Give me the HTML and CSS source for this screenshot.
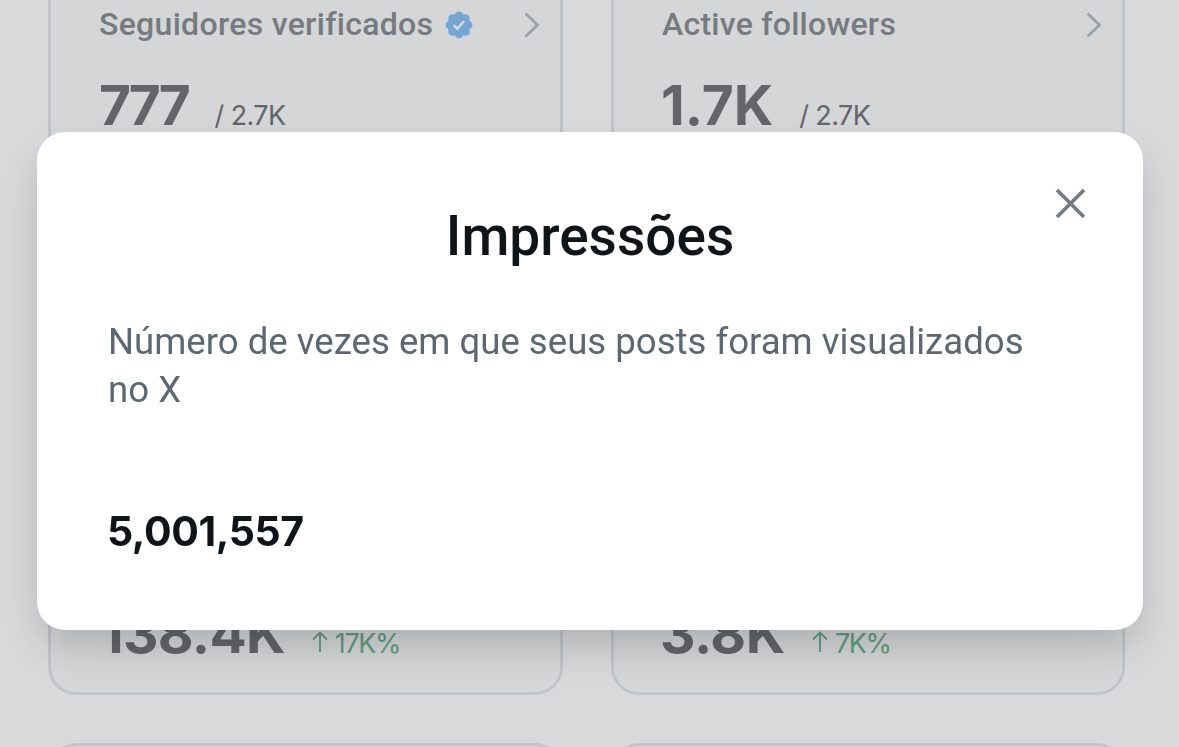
FILE: index.html
```html
<!DOCTYPE html>
<html lang="pt">
<head>
    <meta charset="UTF-8">
    <meta name="viewport" content="width=device-width, initial-scale=1.0">
    <title>Impressões</title>
    <link rel="stylesheet" href="styles.css">
</head>
<body>
    <div class="page">
        <div class="cards">
            <div class="card">
                <div class="card-head">
                    <span class="label label-verified">Seguidores verificados</span>
                    <svg class="badge" viewBox="0 0 28 28">
                        <g fill="#75a5d2">
                            <circle cx="14" cy="14" r="11"/>
                            <circle cx="14" cy="5" r="4.4"/>
                            <circle cx="20.4" cy="7.6" r="4.4"/>
                            <circle cx="23" cy="14" r="4.4"/>
                            <circle cx="20.4" cy="20.4" r="4.4"/>
                            <circle cx="14" cy="23" r="4.4"/>
                            <circle cx="7.6" cy="20.4" r="4.4"/>
                            <circle cx="5" cy="14" r="4.4"/>
                            <circle cx="7.6" cy="7.6" r="4.4"/>
                        </g>
                        <path d="M8.6 14.2l3.6 3.5 6.9-7.6" fill="none" stroke="#d6dadd" stroke-width="2.4"/>
                    </svg>
                    <svg class="chevron" viewBox="0 0 16 26"><path d="M1.5 1.5L13.5 13 1.5 24.5" fill="none" stroke="#97a3ac" stroke-width="2.7"/></svg>
                </div>
                <div class="card-value"><b class="v-777">777</b><span class="total">/ 2.7K</span></div>
            </div>
            <div class="card">
                <div class="card-head">
                    <span class="label label-active">Active followers</span>
                    <svg class="chevron" viewBox="0 0 16 26"><path d="M1.5 1.5L13.5 13 1.5 24.5" fill="none" stroke="#97a3ac" stroke-width="2.7"/></svg>
                </div>
                <div class="card-value"><b class="v-17">1.7K</b><span class="total">/ 2.7K</span></div>
            </div>
            <div class="card"></div>
            <div class="card"></div>
            <div class="card">
                <div class="card-value"><b class="v-138">138.4K</b><svg class="arrow" viewBox="0 0 16 22"><path d="M8 21V2M1 8.5L8 1.5l7 7" fill="none" stroke="#5f9f82" stroke-width="1.9"/></svg><span class="growth">17K%</span></div>
            </div>
            <div class="card">
                <div class="card-value"><b class="v-38">3.8K</b><svg class="arrow" viewBox="0 0 16 22"><path d="M8 21V2M1 8.5L8 1.5l7 7" fill="none" stroke="#5f9f82" stroke-width="1.9"/></svg><span class="growth">7K%</span></div>
            </div>
            <div class="card"></div>
            <div class="card"></div>
        </div>
    </div>

    <div class="overlay">
        <div class="modal">
            <button class="close">
                <svg viewBox="0 0 32 32"><path d="M3 3l27 27M30 3L3 30" fill="none" stroke="#737a84" stroke-width="3.7"/></svg>
            </button>
            <h1>Impressões</h1>
            <p class="desc">Número de vezes em que seus posts foram visualizados<br>no X</p>
            <p class="count">5,001,557</p>
        </div>
    </div>
</body>
</html>
```
FILE: styles.css
```css
* {
    box-sizing: border-box;
}
body {
    margin: 0;
    background: #d9d9db;
    font-family: Inter, "Liberation Sans", sans-serif;
}
.page {
    height: 747px;
    overflow: hidden;
}
.cards {
    display: grid;
    grid-template-columns: 515px 514px;
    grid-template-rows: 216px 216px 216px 40px;
    gap: 48px;
    margin: -49px 0 0 48px;
}
.card {
    display: flex;
    flex-direction: column;
    justify-content: flex-end;
    border: 3px solid #c1c5c9;
    border-radius: 28px;
    background: #d4d6d8;
    padding: 0 20px 26px 48px;
}
.card:nth-child(n+7) {
    height: 40px;
    border-bottom: 0;
    border-radius: 28px 28px 0 0;
    padding: 0;
}
.card-head {
    display: flex;
    align-items: center;
    height: 40px;
    margin-bottom: 27px;
}
.label {
    margin-top: -2px;
    font-family: Roboto, sans-serif;
    font-size: 32px;
    font-weight: 500;
    color: #777b81;
    white-space: nowrap;
}
.label-verified {
    letter-spacing: 0.3px;
}
.label-active {
    letter-spacing: 0.25px;
}
.badge {
    width: 28px;
    height: 28px;
    margin-left: 12px;
}
.chevron {
    width: 16px;
    height: 26px;
    margin-left: auto;
}
.card-value {
    display: flex;
    align-items: baseline;
    height: 66px;
    line-height: 66px;
    white-space: nowrap;
}
.card-value b {
    font-size: 55px;
    font-weight: 700;
    color: #636568;
}
.card-value .v-777 {
    letter-spacing: -3.2px;
}
.card-value .v-17 {
    margin-left: -1px;
}
.card-value .v-138 {
    margin-left: 1px;
    letter-spacing: -0.7px;
}
.card-value .v-38 {
    margin-left: -2px;
    letter-spacing: -0.4px;
}
.total {
    margin-left: 26px;
    font-size: 27px;
    color: #636568;
    letter-spacing: -0.6px;
}
.v-777 + .total {
    margin-left: 27px;
}
.growth {
    margin-left: 7px;
    font-size: 27px;
    color: #5f9f82;
    letter-spacing: -1.4px;
}
.arrow {
    width: 16px;
    height: 22px;
    margin-left: 27px;
}
.overlay {
    position: fixed;
    inset: 0;
    display: flex;
    align-items: flex-start;
    padding: 132px 36px 0 37px;
}
.modal {
    position: relative;
    width: 100%;
    height: 498px;
    padding: 71px 71px 0;
    border-radius: 28px;
    background: #fff;
    box-shadow: 0 20px 40px -6px rgba(0, 0, 0, 0.2);
}
.close {
    position: absolute;
    top: 55px;
    right: 57px;
    width: 32px;
    height: 32px;
    padding: 0;
    border: 0;
    background: none;
}
.close svg {
    display: block;
}
h1 {
    margin: 0;
    line-height: 66px;
    font-family: Roboto, sans-serif;
    font-size: 55px;
    font-weight: 500;
    text-align: center;
    color: #0f1419;
}
.desc {
    margin: 49px 0 0;
    font-family: Roboto, sans-serif;
    font-size: 36.6px;
    line-height: 48px;
    color: #5c6771;
    white-space: nowrap;
}
.count {
    margin: 93px 0 0 -1px;
    font-size: 41px;
    line-height: 48px;
    font-weight: 700;
    letter-spacing: -0.4px;
    color: #0f1419;
}
```
